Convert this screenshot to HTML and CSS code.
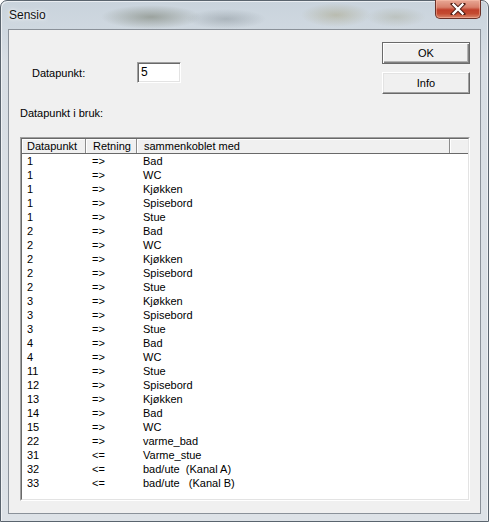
FILE: index.html
```html
<!DOCTYPE html>
<html>
<head>
<meta charset="utf-8">
<title>Sensio</title>
<link rel="stylesheet" href="styles.css">
</head>
<body>
<div class="window">
  <div class="titlebar">
    <span class="title">Sensio</span>
    <span class="close">
      <svg width="16" height="12" viewBox="0 0 16 12">
        <path d="M3 1 L13 11 M13 1 L3 11" stroke="#4a1a12" stroke-width="4.2" stroke-linecap="square" fill="none"/>
        <path d="M3.5 1.5 L12.5 10.5 M12.5 1.5 L3.5 10.5" stroke="#ffffff" stroke-width="2.4" stroke-linecap="square" fill="none"/>
      </svg>
    </span>
  </div>
  <div class="client">
    <div class="top">
      <div class="field">
        <span class="label">Datapunkt:</span>
        <span class="input">5</span>
      </div>
      <div class="buttons">
        <button class="btn btn-default">OK</button>
        <button class="btn">Info</button>
      </div>
    </div>
    <div class="caption">Datapunkt i bruk:</div>
    <div class="list">
      <div class="list-inner">
        <div class="header">
          <div class="hcell c1">Datapunkt</div>
          <div class="hcell c2">Retning</div>
          <div class="hcell c3">sammenkoblet med</div>
          <div class="hcell c4"></div>
        </div>
        <div class="row"><span class="c1">1</span><span class="c2">=&gt;</span><span class="c3">Bad</span></div>
        <div class="row"><span class="c1">1</span><span class="c2">=&gt;</span><span class="c3">WC</span></div>
        <div class="row"><span class="c1">1</span><span class="c2">=&gt;</span><span class="c3">Kjøkken</span></div>
        <div class="row"><span class="c1">1</span><span class="c2">=&gt;</span><span class="c3">Spisebord</span></div>
        <div class="row"><span class="c1">1</span><span class="c2">=&gt;</span><span class="c3">Stue</span></div>
        <div class="row"><span class="c1">2</span><span class="c2">=&gt;</span><span class="c3">Bad</span></div>
        <div class="row"><span class="c1">2</span><span class="c2">=&gt;</span><span class="c3">WC</span></div>
        <div class="row"><span class="c1">2</span><span class="c2">=&gt;</span><span class="c3">Kjøkken</span></div>
        <div class="row"><span class="c1">2</span><span class="c2">=&gt;</span><span class="c3">Spisebord</span></div>
        <div class="row"><span class="c1">2</span><span class="c2">=&gt;</span><span class="c3">Stue</span></div>
        <div class="row"><span class="c1">3</span><span class="c2">=&gt;</span><span class="c3">Kjøkken</span></div>
        <div class="row"><span class="c1">3</span><span class="c2">=&gt;</span><span class="c3">Spisebord</span></div>
        <div class="row"><span class="c1">3</span><span class="c2">=&gt;</span><span class="c3">Stue</span></div>
        <div class="row"><span class="c1">4</span><span class="c2">=&gt;</span><span class="c3">Bad</span></div>
        <div class="row"><span class="c1">4</span><span class="c2">=&gt;</span><span class="c3">WC</span></div>
        <div class="row"><span class="c1">11</span><span class="c2">=&gt;</span><span class="c3">Stue</span></div>
        <div class="row"><span class="c1">12</span><span class="c2">=&gt;</span><span class="c3">Spisebord</span></div>
        <div class="row"><span class="c1">13</span><span class="c2">=&gt;</span><span class="c3">Kjøkken</span></div>
        <div class="row"><span class="c1">14</span><span class="c2">=&gt;</span><span class="c3">Bad</span></div>
        <div class="row"><span class="c1">15</span><span class="c2">=&gt;</span><span class="c3">WC</span></div>
        <div class="row"><span class="c1">22</span><span class="c2">=&gt;</span><span class="c3">varme_bad</span></div>
        <div class="row"><span class="c1">31</span><span class="c2">&lt;=</span><span class="c3">Varme_stue</span></div>
        <div class="row"><span class="c1">32</span><span class="c2">&lt;=</span><span class="c3">bad/ute  (Kanal A)</span></div>
        <div class="row"><span class="c1">33</span><span class="c2">&lt;=</span><span class="c3">bad/ute   (Kanal B)</span></div>
      </div>
    </div>
  </div>
</div>
</body>
</html>
```

FILE: styles.css
```css
html, body {
  margin: 0;
  padding: 0;
}

body {
  width: 489px;
  height: 522px;
  overflow: hidden;
  background: #ffffff;
  font-family: "Liberation Sans", Arial, sans-serif;
  font-size: 11px;
  color: #000000;
}

.window {
  box-sizing: border-box;
  width: 489px;
  height: 522px;
  border: 1px solid #5a646e;
  border-radius: 7px 7px 0 0;
  padding: 0 7px 7px 7px;
  display: flex;
  flex-direction: column;
  background:
    radial-gradient(ellipse 50px 12px at 150px 16px, rgba(95, 100, 80, 0.45), rgba(95, 100, 80, 0) 100%),
    radial-gradient(ellipse 40px 10px at 225px 18px, rgba(110, 120, 125, 0.35), rgba(110, 120, 125, 0) 100%),
    radial-gradient(ellipse 35px 12px at 335px 14px, rgba(150, 140, 90, 0.35), rgba(150, 140, 90, 0) 100%),
    radial-gradient(ellipse 30px 10px at 395px 16px, rgba(150, 150, 120, 0.3), rgba(150, 150, 120, 0) 100%),
    linear-gradient(to bottom, #c9d3dc 0px, #cfd8e0 28px, #d8dee4 60px, #dde2e7 100%);
  box-shadow: inset 1px 1px 0 rgba(255, 255, 255, 0.6), inset -1px 0 0 rgba(255, 255, 255, 0.5);
}

.titlebar {
  height: 28px;
  flex: none;
  display: flex;
  align-items: flex-start;
  justify-content: space-between;
}

.title {
  margin-top: 7px;
  margin-left: 1px;
  font-family: "Liberation Sans", Arial, sans-serif;
  font-size: 12px;
  color: #111111;
  text-shadow: 0 0 6px rgba(255, 255, 255, 0.9), 0 0 3px rgba(255, 255, 255, 0.9);
}

.close {
  box-sizing: border-box;
  width: 46px;
  height: 19px;
  margin-top: -1px;
  border: 1px solid #6b3128;
  border-top: none;
  border-radius: 0 0 5px 5px;
  background: linear-gradient(to bottom, #e8a896 0%, #d8806b 40%, #c0402b 55%, #c44a30 75%, #d9866b 100%);
  box-shadow: inset 0 0 0 1px rgba(255, 200, 180, 0.45);
  display: flex;
  align-items: center;
  justify-content: center;
}

.close svg {
  display: block;
}

.client {
  box-sizing: border-box;
  width: 473px;
  height: 485px;
  flex: none;
  background: #f0f0f0;
  box-shadow: inset 0 0 0 1px #8a9199;
  padding: 12px 11px 0 12px;
  display: flex;
  flex-direction: column;
}

.top {
  display: flex;
  justify-content: space-between;
  align-items: flex-start;
}

.field {
  margin-top: 21px;
  margin-left: 12px;
  display: flex;
  align-items: center;
}

.label {
  width: 105px;
}

.input {
  box-sizing: border-box;
  width: 44px;
  height: 21px;
  background: #ffffff;
  border: 1px solid;
  border-color: #a0a0a0 #ffffff #ffffff #a0a0a0;
  box-shadow: inset 1px 1px 0 #696969, inset -1px -1px 0 #e3e3e3;
  padding: 2px 0 0 3px;
  font-size: 12px;
  line-height: 15px;
}

.buttons {
  margin-top: 1px;
  display: flex;
  flex-direction: column;
  gap: 8px;
}

.btn {
  box-sizing: border-box;
  width: 88px;
  height: 22px;
  margin: 0;
  padding: 0;
  font-family: "Liberation Sans", Arial, sans-serif;
  font-size: 11px;
  color: #000000;
  background: #f0f0f0;
  border: 1px solid;
  border-color: #ffffff #696969 #696969 #ffffff;
  box-shadow: inset -1px -1px 0 #a0a0a0, inset 1px 1px 0 #e3e3e3;
}

.btn-default {
  border-color: #6a6a6a;
  box-shadow: inset 1px 1px 0 #ffffff, inset -1px -1px 0 #808080, inset -2px -2px 0 #b4b4b4;
}

.caption {
  margin-top: 12px;
  line-height: 14px;
}

.list {
  box-sizing: border-box;
  margin-top: 17px;
  width: 450px;
  height: 364px;
  border: 1px solid;
  border-color: #a0a0a0 #ffffff #ffffff #a0a0a0;
}

.list-inner {
  box-sizing: border-box;
  height: 100%;
  background: #ffffff;
  border: 1px solid;
  border-color: #696969 #e3e3e3 #e3e3e3 #696969;
  overflow: hidden;
}

.header {
  display: grid;
  grid-template-columns: 64px 51px 313px 1fr;
  height: 15px;
  border-bottom: 1px solid #696969;
  box-sizing: border-box;
  background: #f0f0f0;
}

.hcell {
  box-sizing: border-box;
  height: 14px;
  line-height: 14px;
  border-right: 1px solid #8c8c8c;
  box-shadow: inset 1px 1px 0 #ffffff;
  white-space: nowrap;
  overflow: hidden;
}

.hcell.c1 { padding-left: 5px; }
.hcell.c2 { padding-left: 7px; }
.hcell.c3 { padding-left: 7px; }
.hcell.c4 { border-right: none; }

.row {
  display: grid;
  grid-template-columns: 64px 51px 313px;
  height: 14px;
  line-height: 14px;
  white-space: pre;
}

.row .c1 { padding-left: 5px; }
.row .c2 { padding-left: 6px; }
.row .c3 { padding-left: 6px; }
```
